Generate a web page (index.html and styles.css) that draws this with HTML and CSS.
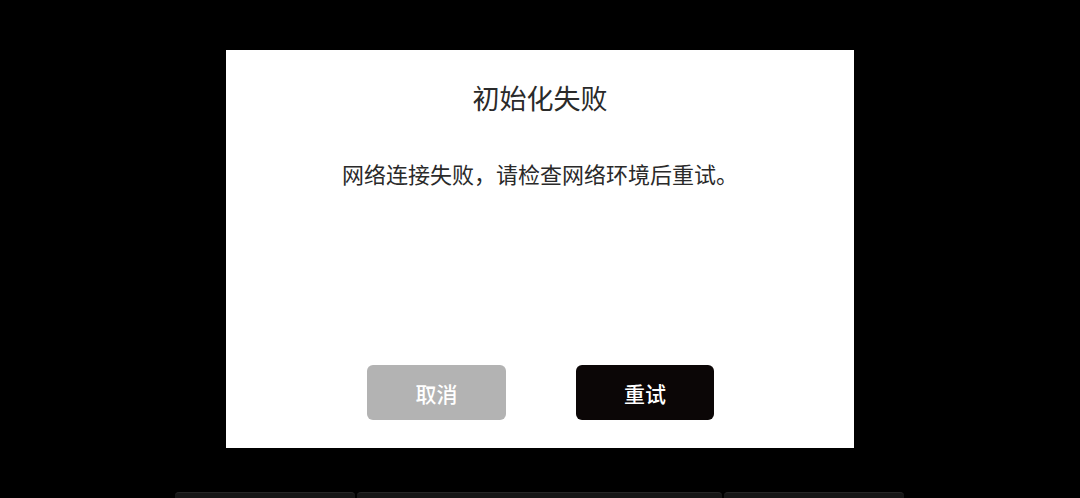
FILE: index.html
```html
<!DOCTYPE html>
<html lang="zh-CN">
<head>
<meta charset="utf-8">
<link rel="stylesheet" href="styles.css">
</head>
<body>
<div class="page">
  <div class="dialog">
    <div class="title">初始化失败</div>
    <div class="message">网络连接失败，请检查网络环境后重试。</div>
    <div class="actions">
      <button class="btn btn-cancel">取消</button>
      <button class="btn btn-retry">重试</button>
    </div>
  </div>
  <div class="underbar">
    <div class="seg seg-a"></div>
    <div class="seg seg-b"></div>
    <div class="seg seg-c"></div>
  </div>
</div>
</body>
</html>
```

FILE: styles.css
```css
html, body {
  margin: 0;
  padding: 0;
  background: #000;
  width: 1080px;
  height: 498px;
  overflow: hidden;
  font-family: "Noto Sans CJK SC", "Noto Sans", sans-serif;
}
.page {
  padding-top: 50px;
  display: flex;
  flex-direction: column;
  align-items: center;
}
.dialog {
  width: 628px;
  height: 398px;
  background: #fff;
  box-sizing: border-box;
  display: flex;
  flex-direction: column;
  align-items: center;
  padding: 34px 0 28px;
}
.title {
  font-size: 27px;
  line-height: 27px;
  color: #2a2a2a;
}
.message {
  margin-top: 51px;
  font-size: 22px;
  line-height: 22px;
  color: #2a2a2a;
}
.actions {
  margin-top: auto;
  display: flex;
  gap: 70px;
  padding-left: 1px;
}
.btn {
  width: 139px;
  height: 55px;
  border: none;
  border-radius: 6px;
  font-family: inherit;
  font-size: 21px;
  font-weight: 500;
  color: #fff;
  padding: 0;
  display: flex;
  align-items: center;
  justify-content: center;
}
.btn-cancel {
  background: #b3b3b3;
}
.btn-retry {
  width: 138px;
  background: #0b0606;
}
.underbar {
  margin-top: 44px;
  display: flex;
  gap: 2px;
  width: 729px;
  margin-left: -2px;
}
.seg {
  height: 12px;
  background: #161616;
  border-top: 1px solid #262626;
  border-radius: 4px 4px 0 0;
}
.seg-a { width: 180px; }
.seg-b { width: 365px; }
.seg-c { width: 180px; }
```
